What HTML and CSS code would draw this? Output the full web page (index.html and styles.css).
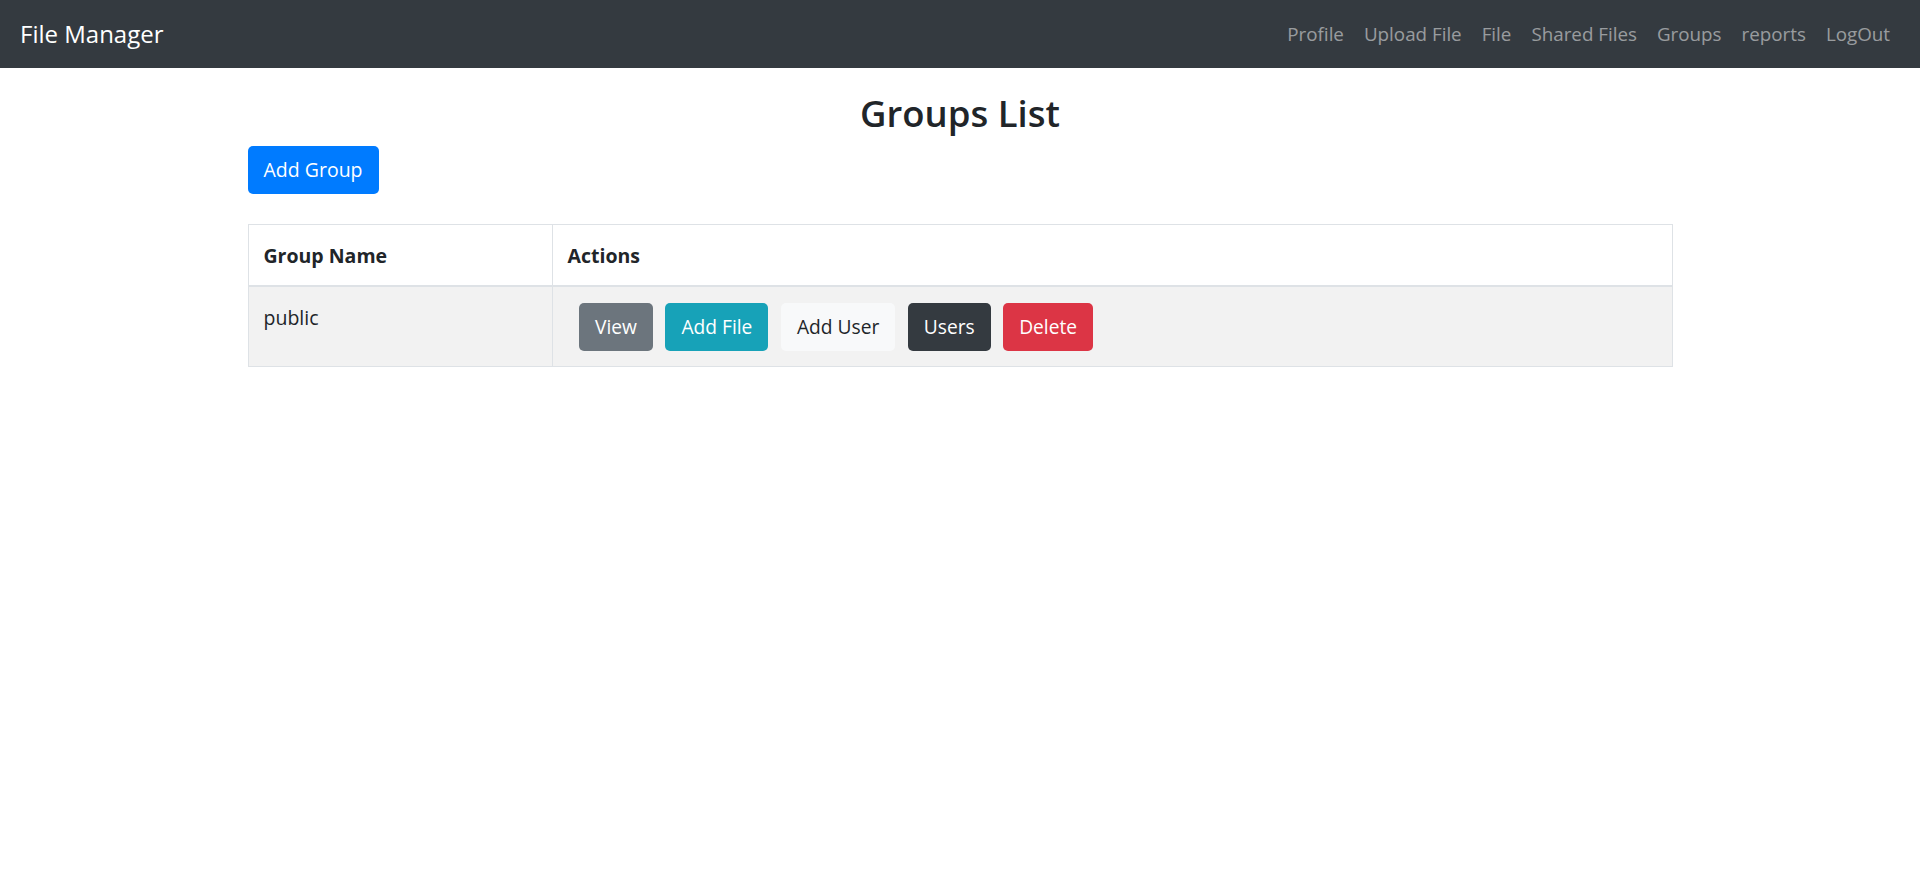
FILE: index.html
```html
<!DOCTYPE html>
<html lang="en">
<head>
<meta charset="utf-8">
<title>File Manager</title>
<link rel="stylesheet" href="styles.css">
</head>
<body>
<nav class="navbar">
  <a class="brand" href="#">File Manager</a>
  <ul class="nav-links">
    <li><a href="#">Profile</a></li>
    <li><a href="#">Upload File</a></li>
    <li><a href="#">File</a></li>
    <li><a href="#">Shared Files</a></li>
    <li><a href="#">Groups</a></li>
    <li><a href="#">reports</a></li>
    <li><a href="#">LogOut</a></li>
  </ul>
</nav>
<main class="container">
  <h3 class="page-title">Groups List</h3>
  <div class="toolbar">
    <a class="btn btn-primary" href="#">Add Group</a>
  </div>
  <table class="groups-table">
    <thead>
      <tr>
        <th class="col-name">Group Name</th>
        <th>Actions</th>
      </tr>
    </thead>
    <tbody>
      <tr class="striped">
        <td class="name-cell">public</td>
        <td>
          <div class="actions">
            <a class="btn btn-secondary" href="#">View</a>
            <a class="btn btn-info" href="#">Add File</a>
            <a class="btn btn-light" href="#">Add User</a>
            <a class="btn btn-dark" href="#">Users</a>
            <a class="btn btn-danger" href="#">Delete</a>
          </div>
        </td>
      </tr>
    </tbody>
  </table>
</main>
</body>
</html>
```
FILE: styles.css
```css
* { box-sizing: border-box; }

html, body {
  margin: 0;
  padding: 0;
  background: #fff;
}

body {
  font-family: "Open Sans", "Noto Sans", sans-serif;
  font-size: 19.5px;
  line-height: 30px;
  color: #212529;
}

a { text-decoration: none; }

.navbar {
  height: 68px;
  background: #343a40;
  display: flex;
  align-items: center;
  justify-content: space-between;
  padding: 0 20px;
}

.brand {
  color: #fff;
  font-size: 24px;
  line-height: 38px;
}

.nav-links {
  list-style: none;
  margin: 0;
  padding: 0;
  display: flex;
}

.nav-links a {
  display: block;
  padding: 0 10px;
  color: rgba(255, 255, 255, 0.5);
  font-size: 18.8px;
  line-height: 30px;
}

.container {
  width: 1425px;
  margin: 0 auto;
}

.page-title {
  margin: 24px 0 12px;
  text-align: center;
  font-size: 36.5px;
  line-height: 42px;
  font-weight: 600;
  color: #212529;
}

.toolbar {
  display: flex;
  margin-bottom: 30.5px;
}

.btn {
  display: inline-block;
  padding: 7.75px 15px;
  border: 1px solid transparent;
  border-radius: 5px;
  font-size: 19.5px;
  line-height: 30px;
  text-align: center;
  white-space: nowrap;
}

.actions .btn { font-size: 19.2px; }

.btn-primary { background: #007bff; color: #fff; }
.btn-secondary { background: #6c757d; color: #fff; }
.btn-info { background: #17a2b8; color: #fff; }
.btn-light { background: #f8f9fa; color: #212529; }
.btn-dark { background: #343a40; color: #fff; }
.btn-danger { background: #dc3545; color: #fff; }

.groups-table {
  width: 100%;
  border-collapse: collapse;
  border: 1px solid #dee2e6;
}

.groups-table th,
.groups-table td {
  border: 1px solid #dee2e6;
  padding: 15px;
  text-align: left;
  vertical-align: top;
}

.groups-table th {
  font-weight: 700;
}

.groups-table thead th {
  padding: 16px 15px 14px;
  border-bottom: 2px solid #dee2e6;
}

.col-name { width: 304px; }

.striped { background: #f2f2f2; }

.name-cell { padding-top: 16px !important; }

.actions {
  display: flex;
  gap: 12.5px;
  padding: 1px 0 0 11.5px;
}
```
